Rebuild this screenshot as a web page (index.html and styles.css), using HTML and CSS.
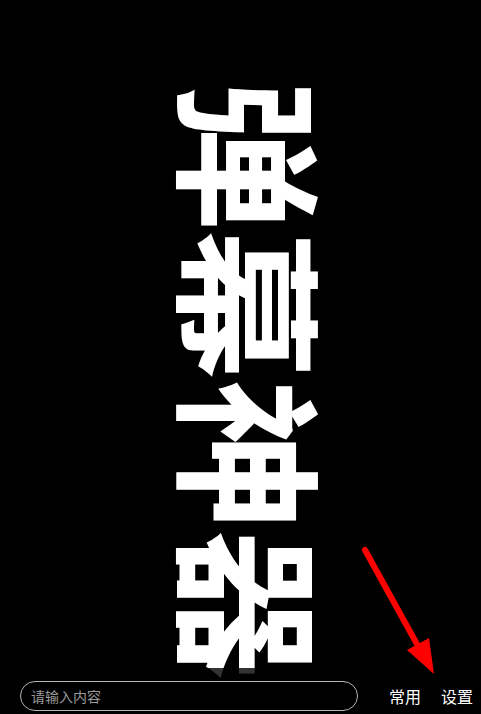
FILE: index.html
```html
<!DOCTYPE html>
<html lang="zh">
<head>
<meta charset="utf-8">
<link rel="stylesheet" href="styles.css">
</head>
<body>
<div class="app">
  <div class="stage">
    <div class="danmu">弹幕神器</div>
  </div>
  <div class="bar">
    <input class="input" type="text" placeholder="请输入内容">
    <span class="btn btn-common">常用</span>
    <span class="btn btn-set">设置</span>
  </div>
  <svg class="arrow" width="481" height="714" viewBox="0 0 481 714">
    <line x1="365" y1="550" x2="418" y2="646" stroke="#ff0000" stroke-width="6" stroke-linecap="round"/>
    <polygon points="407,650 429,638 434,674" fill="#ff0000"/>
  </svg>
</div>
</body>
</html>
```
FILE: styles.css
```css
html, body {
  margin: 0;
  padding: 0;
  background: #000;
}
body {
  font-family: "Noto Sans CJK SC", "Noto Sans", sans-serif;
}
.app {
  position: relative;
  width: 481px;
  height: 714px;
  display: grid;
  grid-template: 1fr / 1fr;
  overflow: hidden;
}
.stage {
  grid-area: 1 / 1;
  display: flex;
  justify-content: center;
  padding-top: 80px;
  padding-left: 28px;
  overflow: hidden;
}
.danmu {
  writing-mode: vertical-rl;
  text-orientation: sideways;
  font-size: 150px;
  line-height: 1;
  font-weight: 700;
  color: #fff;
  white-space: nowrap;
}
.bar {
  grid-area: 1 / 1;
  align-self: end;
  height: 46px;
  box-sizing: border-box;
  padding: 13px 0 3px 20px;
  background: rgba(0, 0, 0, 0.8);
  display: flex;
  align-items: center;
  position: relative;
  z-index: 1;
}
.input {
  width: 338px;
  height: 30px;
  box-sizing: border-box;
  border: 1px solid #b5b5b5;
  border-radius: 15px;
  background: transparent;
  color: #fff;
  padding: 0 10px;
  font-family: "Noto Sans CJK SC", sans-serif;
  font-size: 14px;
  outline: none;
}
.input::placeholder {
  color: #9a9a9a;
}
.btn {
  color: #fff;
  font-size: 16px;
  line-height: 30px;
}
.btn-common {
  margin-left: 31px;
}
.btn-set {
  margin-left: 20px;
}
.arrow {
  position: absolute;
  left: 0;
  top: 0;
  z-index: 2;
  pointer-events: none;
}
```
